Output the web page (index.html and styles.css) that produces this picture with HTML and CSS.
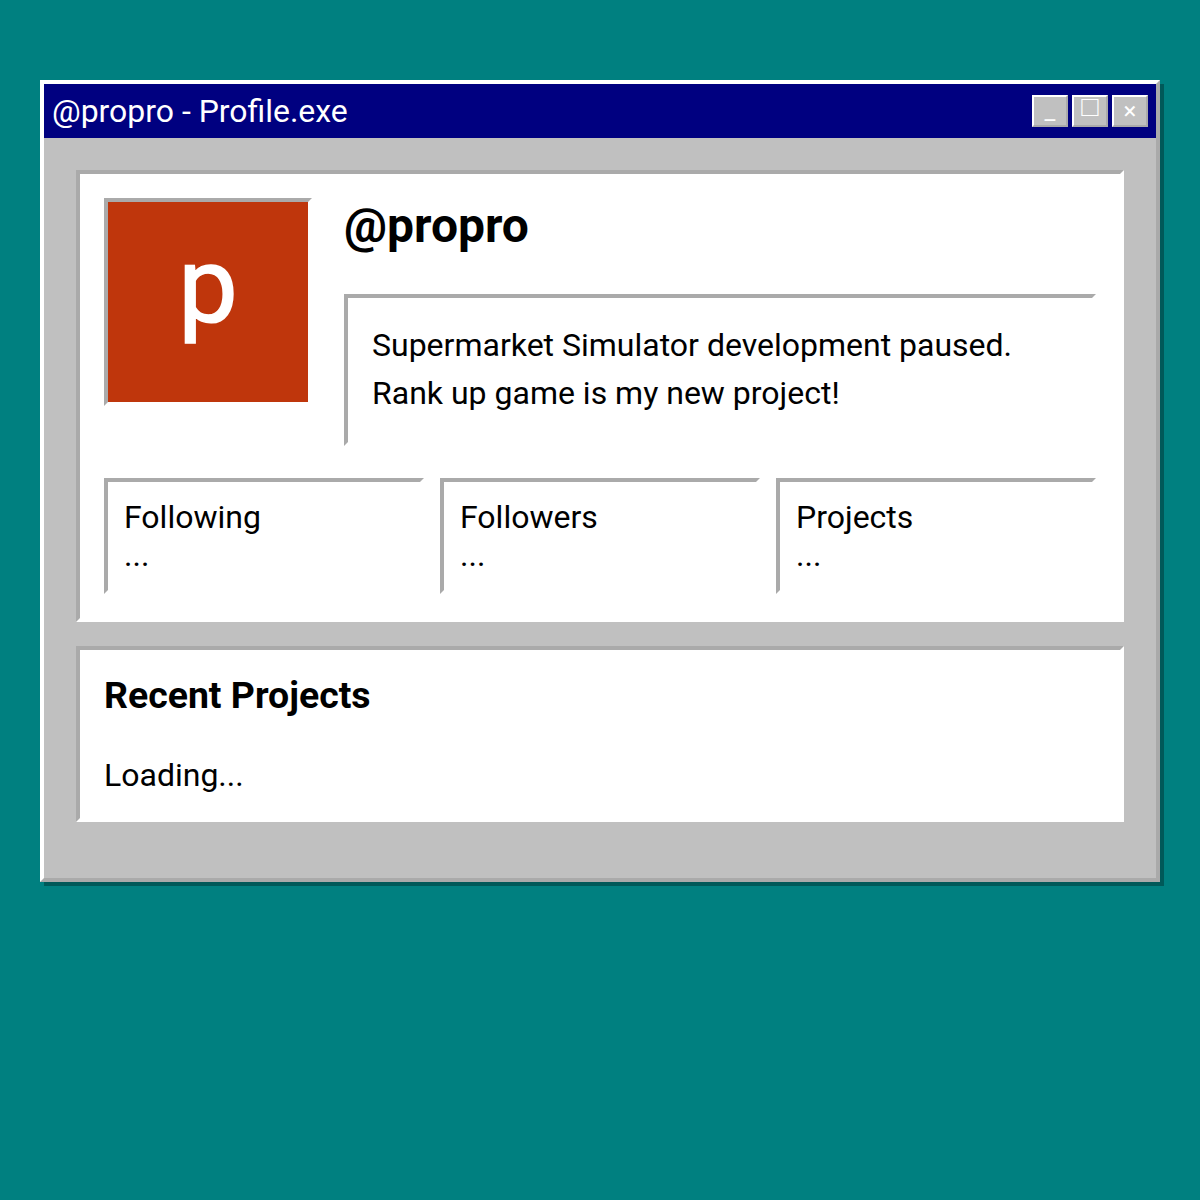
FILE: index.html
```html
<!DOCTYPE html>
<html lang="en">
<head>
    <meta charset="UTF-8">
    <meta name="viewport" content="width=device-width, initial-scale=1.0">
    <title>@propro - Profile.exe</title>
    <link rel="stylesheet" href="styles.css">
</head>
<body>
    <div class="window">
        <div class="title-bar">
            <span class="title-text">@propro - Profile.exe</span>
            <div class="title-buttons">
                <button class="title-button">_</button>
                <button class="title-button button-max">□</button>
                <button class="title-button">×</button>
            </div>
        </div>
        <div class="window-content">
            <div class="panel">
                <div class="profile-header">
                    <div class="avatar"><span class="avatar-letter">p</span></div>
                    <div class="profile-info">
                        <h1>@propro</h1>
                        <div class="bio">
                            <div>Supermarket Simulator development paused.</div>
                            <div>Rank up game is my new project!</div>
                        </div>
                    </div>
                </div>
                <div class="stats">
                    <div class="stat">
                        <div class="stat-label">Following</div>
                        <div class="stat-value">...</div>
                    </div>
                    <div class="stat">
                        <div class="stat-label">Followers</div>
                        <div class="stat-value">...</div>
                    </div>
                    <div class="stat">
                        <div class="stat-label">Projects</div>
                        <div class="stat-value">...</div>
                    </div>
                </div>
            </div>
            <div class="panel">
                <h2>Recent Projects</h2>
                <div class="loading">Loading...</div>
            </div>
        </div>
    </div>
</body>
</html>
```
FILE: styles.css
```css
body {
    font-family: Roboto, sans-serif;
    font-size: 32px;
    line-height: 48px;
    background: #008080;
    color: #000;
    margin: 0;
    padding: 80px 40px;
}
.window {
    background: #c0c0c0;
    border: 4px solid;
    border-color: #fff #aaa #aaa #fff;
    box-shadow: 4px 4px 0 rgba(0, 0, 0, 0.3);
}
.title-bar {
    background: #000080;
    color: #fff;
    height: 54px;
    padding: 0 8px;
    display: flex;
    align-items: center;
    justify-content: space-between;
}
.title-text {
    font-size: 31.95px;
}
.title-buttons {
    display: flex;
    gap: 4px;
}
.title-button {
    width: 36px;
    height: 32px;
    padding: 0;
    background: #c0c0c0;
    color: #fff;
    border: 2px solid;
    border-color: #fff #aaa #aaa #fff;
    font-family: Roboto, sans-serif;
    font-size: 24px;
    line-height: 28px;
}
.button-max {
    font-size: 29px;
    line-height: 18px;
    padding-bottom: 10px;
}
.window-content {
    padding: 32px;
}
.panel {
    background: #fff;
    border: 4px solid;
    border-color: #aaa #fff #fff #aaa;
    padding: 24px;
    margin-bottom: 24px;
}
.profile-header {
    display: flex;
    gap: 32px;
}
.avatar {
    width: 200px;
    height: 200px;
    flex-shrink: 0;
    background: #bf360c;
    border: 4px solid;
    border-color: #aaa #fff #fff #aaa;
    display: flex;
    align-items: center;
    justify-content: center;
}
.avatar-letter {
    color: #fff;
    font-size: 106px;
    line-height: 1;
    padding-bottom: 34px;
    -webkit-text-stroke: 1.5px #fff;
    filter: blur(0.7px);
}
.profile-info {
    flex: 1;
}
h1 {
    font-size: 48px;
    line-height: 56px;
    margin: 0 0 40px;
}
.bio {
    border: 4px solid;
    border-color: #aaa #fff #fff #aaa;
    padding: 23px 24px 25px;
}
.stats {
    display: grid;
    grid-template-columns: repeat(3, 1fr);
    gap: 16px;
    margin-top: 32px;
}
.stat {
    border: 4px solid;
    border-color: #aaa #fff #fff #aaa;
    padding: 15px 16px 17px;
}
.stat-label {
    line-height: 40px;
}
.stat-value {
    line-height: 36px;
}
h2 {
    font-size: 37.44px;
    line-height: 42px;
    margin: 0 0 40px;
}
.loading {
    line-height: 38px;
}
```
